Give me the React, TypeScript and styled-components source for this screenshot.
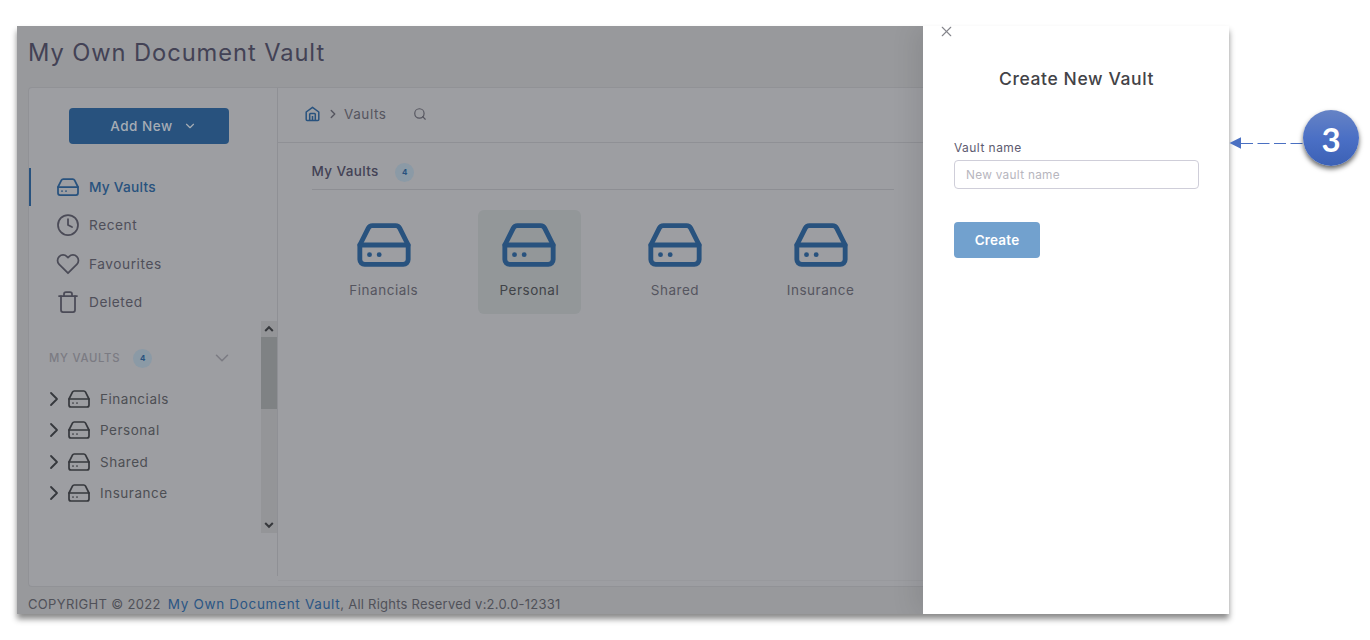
import React from 'react';
import styled, { createGlobalStyle, css } from 'styled-components';
import {
  FiChevronDown, FiChevronRight, FiClock, FiHardDrive, FiHeart, FiSearch, FiTrash, FiX,
} from 'react-icons/fi';

const blue = '#28527e';
const ink = '#434255';
const text = '#55555f';
const line = '#8f9095';

const GlobalStyle = createGlobalStyle`
  * { box-sizing: border-box; }
  body {
    margin: 0;
    background: #fff;
    font-family: Inter, "Liberation Sans", sans-serif;
    overflow: hidden;
  }
`;

const Page = styled.div`
  display: flex;
  align-items: flex-start;
  width: 1370px;
  height: 640px;
  padding: 26px 0 0 17px;
`;

const Frame = styled.div`
  display: flex;
  flex: none;
  width: 1212px;
  height: 588px;
  box-shadow: 0 5px 6px 0 rgba(0, 0, 0, 0.46);
`;

const AppPane = styled.div`
  display: flex;
  flex-direction: column;
  width: 906px;
  padding-left: 11px;
  background: #98999c;
  overflow: hidden;
`;

const AppTitle = styled.h1`
  height: 61px;
  margin: 0;
  font-size: 23.7px;
  font-weight: 400;
  line-height: 54px;
  letter-spacing: 0.92px;
  color: ${ink};
`;

const Card = styled.div`
  display: flex;
  height: 500px;
  border: 1px solid #919296;
  border-right: 0;
  border-radius: 4px 0 0 4px;
  background: #9d9ea2;
`;

const Sidebar = styled.aside`
  display: flex;
  flex-direction: column;
  width: 249px;
  height: 488px;
  border-right: 1px solid ${line};
`;

const AddButton = styled.button`
  display: flex;
  align-items: center;
  justify-content: center;
  gap: 10px;
  width: 160px;
  height: 36px;
  margin: 20px 0 24px 40px;
  padding: 0 0 0 9px;
  border: 0;
  border-radius: 4px;
  background: ${blue};
  color: #a6adb5;
  font: 500 13.5px Inter, sans-serif;
  letter-spacing: 0.5px;
`;

const Nav = styled.nav`
  display: flex;
  flex-direction: column;
`;

const NavItem = styled.a<{ $active?: boolean }>`
  display: flex;
  align-items: center;
  gap: 9px;
  height: 38.25px;
  padding-left: 25px;
  border-left: 2px solid transparent;
  font-size: 13.7px;
  letter-spacing: 0.55px;
  color: #4f4f5a;
  svg { stroke-width: 1.75; color: #4b4b57; }
  ${(p) => p.$active && css`
    border-left-color: ${blue};
    font-weight: 500;
    letter-spacing: 0.24px;
    color: ${blue};
    svg { color: ${blue}; }
  `}
`;

const TreeArea = styled.div`
  display: flex;
  justify-content: space-between;
  height: 212px;
`;

const Tree = styled.div`
  display: flex;
  flex-direction: column;
  width: 204px;
  padding: 27px 0 0 20px;
`;

const TreeHead = styled.div`
  display: flex;
  align-items: center;
  height: 20px;
  margin-bottom: 15px;
  font-size: 11.3px;
  font-weight: 500;
  letter-spacing: 0.75px;
  color: #7b7b83;
  white-space: nowrap;
  svg { margin-left: auto; stroke-width: 1.7; }
`;

const Badge = styled.span`
  display: inline-flex;
  align-items: center;
  justify-content: center;
  width: 19px;
  height: 19px;
  border-radius: 50%;
  background: #8b9aa6;
  color: ${blue};
  font-size: 8px;
  font-weight: 700;
  letter-spacing: 0;
`;

const TreeBadge = styled(Badge)`
  margin-left: 13px;
`;

const TreeRow = styled.div`
  display: flex;
  align-items: center;
  height: 31.5px;
  font-size: 13.5px;
  letter-spacing: 0.52px;
  color: #4d4f54;
`;

const RowChevron = styled(FiChevronRight)`
  margin-left: -7px;
  margin-right: 1px;
  stroke-width: 1.8;
  color: #36383d;
`;

const RowIcon = styled(FiHardDrive)`
  margin-right: 9px;
  stroke-width: 1.7;
  color: #36383d;
`;

const ScrollBar = styled.div`
  display: flex;
  flex-direction: column;
  width: 16px;
  background: #949598;
`;

const ScrollButton = styled.span`
  display: flex;
  align-items: center;
  justify-content: center;
  height: 16px;
`;

const ScrollThumb = styled.span`
  height: 72px;
  margin-bottom: auto;
  background: #7f8284;
`;

const Main = styled.main`
  flex: 1;
  height: 493px;
  border-bottom: 1px solid #98999d;
`;

const Crumbs = styled.div`
  display: flex;
  align-items: center;
  height: 55px;
  padding: 0 0 2px 27px;
  border-bottom: 1px solid ${line};
  font-size: 13.5px;
  letter-spacing: 0.58px;
  color: ${text};
`;

const CrumbIcon = styled(FiChevronRight)`
  margin: 0 4px 0 6px;
  stroke-width: 2.4;
`;

const SearchIcon = styled(FiSearch)`
  margin-left: 26px;
  margin-top: -1px;
`;

const Section = styled.section`
  width: 582px;
  margin-left: 33.500px;
`;

const SectionHead = styled.div`
  display: flex;
  align-items: center;
  height: 47px;
  padding-top: 12px;
  margin-bottom: 20px;
  border-bottom: 1px solid #8d8e93;
  font-size: 13.5px;
  font-weight: 500;
  letter-spacing: 0.38px;
  color: ${ink};
`;

const SectionTitle = styled.span`
  margin: -3px 16.5px 0 0;
`;

const Tiles = styled.div`
  display: grid;
  grid-template-columns: repeat(4, 145.6px);
  justify-items: center;
  margin-left: -0.5px;
`;

const Tile = styled.div<{ $active?: boolean }>`
  display: flex;
  flex-direction: column;
  align-items: center;
  width: 103px;
  height: 104px;
  padding-top: 6px;
  border-radius: 6px;
  background: ${(p) => (p.$active ? '#939799' : 'transparent')};
  color: ${(p) => (p.$active ? '#404348' : text)};
  font-size: 13.5px;
  letter-spacing: 0.52px;
  svg { margin-bottom: 8px; color: ${blue}; }
`;

const Footer = styled.footer`
  display: flex;
  height: 27px;
  padding-top: 1px;
  line-height: 33px;
  font-size: 13px;
  letter-spacing: 0.34px;
  color: #505159;
  white-space: pre;
`;

const FooterLink = styled.a`
  margin-left: 7px;
  font-size: 13.5px;
  letter-spacing: 0.68px;
  color: #2b5684;
`;

const Rights = styled.span`
  letter-spacing: 0.23px;
`;

const Drawer = styled.section`
  position: relative;
  display: flex;
  flex-direction: column;
  align-items: flex-start;
  width: 306px;
  padding: 0 29px 0 31px;
  background: #fff;
  box-shadow: -8px 0 24px rgba(0, 0, 0, 0.09);
  clip-path: inset(0 0 0 -40px);
`;

const CloseIcon = styled(FiX)`
  margin: -3px 0 0 -16px;
  stroke-width: 1.6;
  color: #85868c;
`;

const DrawerTitle = styled.h2`
  align-self: center;
  margin: 26px 0 49px -1px;
  font-size: 17.5px;
  font-weight: 450;
  line-height: 26px;
  letter-spacing: 0.6px;
  color: #434347;
`;

const Label = styled.label`
  height: 20px;
  font-size: 12px;
  line-height: 16px;
  letter-spacing: 0.45px;
  color: #5d5b70;
`;

const Input = styled.input`
  width: 245px;
  height: 29px;
  padding: 0 11px;
  border: 1px solid #cfced9;
  border-radius: 4px;
  font: 400 11.8px Inter, sans-serif;
  letter-spacing: 0.3px;
  &::placeholder { color: #b7b6be; opacity: 1; }
`;

const CreateButton = styled.button`
  width: 86px;
  height: 36px;
  margin-top: 33px;
  padding: 0;
  border: 0;
  border-radius: 4px;
  background: #72a1ce;
  color: #fff;
  font: 600 13.5px Inter, sans-serif;
  letter-spacing: 0.2px;
`;

const Form = styled.form`
  display: flex;
  flex-direction: column;
  align-items: flex-start;
  margin-top: -1px;
`;

const Callout = styled.div`
  display: flex;
  align-items: center;
  margin-top: 84px;
`;

const Arrow = styled.svg`
  margin-top: 10px;
`;

const Step = styled.div`
  display: flex;
  align-items: center;
  justify-content: center;
  width: 56px;
  height: 56px;
  padding-top: 1px;
  border-radius: 50%;
  background: linear-gradient(#6683c5, #4a6fc5 52%, #3c61b5);
  box-shadow: 0 3px 5px rgba(0, 0, 0, 0.6);
  color: #fff;
  font: 700 33px Lato, sans-serif;
`;

const vaults = ['Financials', 'Personal', 'Shared', 'Insurance'];

const HomeIcon = () => (
  <svg width="15" height="16" viewBox="0 0 15 16" fill="none" stroke={blue} strokeWidth="1.5" strokeLinejoin="round">
    <path d="M1.2 6 7.500 1.300 13.800 6v7.600a1 1 0 0 1-1 1H2.200a1 1 0 0 1-1-1Z" />
    <path d="M4.700 14.400V8.200a.8.8 0 0 1 .8-.8h4a.8.8 0 0 1 .8.8v6.200M7.500 10v4.400" />
  </svg>
);

const ScrollArrow = ({ down }: { down?: boolean }) => (
  <svg width="10" height="8" viewBox="0 0 10 8" fill="none" stroke="#36383c" strokeWidth="2">
    <path d={down ? 'M1.2 2 5 5.8 8.8 2' : 'M1.2 6 5 2.2 8.8 6'} />
  </svg>
);

export default function App() {
  return (
    <>
      <GlobalStyle />
      <Page>
        <Frame>
          <AppPane>
            <AppTitle>My Own Document Vault</AppTitle>
            <Card>
              <Sidebar>
                <AddButton>Add New <FiChevronDown size={14} /></AddButton>
                <Nav>
                  <NavItem $active><FiHardDrive size={24} />My Vaults</NavItem>
                  <NavItem><FiClock size={24} />Recent</NavItem>
                  <NavItem><FiHeart size={24} />Favourites</NavItem>
                  <NavItem><FiTrash size={24} />Deleted</NavItem>
                </Nav>
                <TreeArea>
                  <Tree>
                    <TreeHead>MY VAULTS<TreeBadge>4</TreeBadge><FiChevronDown size={22} /></TreeHead>
                    {vaults.map((name) => (
                      <TreeRow key={name}>
                        <RowChevron size={24} />
                        <RowIcon size={24} />
                        {name}
                      </TreeRow>
                    ))}
                  </Tree>
                  <ScrollBar>
                    <ScrollButton><ScrollArrow /></ScrollButton>
                    <ScrollThumb />
                    <ScrollButton><ScrollArrow down /></ScrollButton>
                  </ScrollBar>
                </TreeArea>
              </Sidebar>
              <Main>
                <Crumbs>
                  <HomeIcon />
                  <CrumbIcon size={14} />
                  Vaults
                  <SearchIcon size={14} />
                </Crumbs>
                <Section>
                  <SectionHead><SectionTitle>My Vaults</SectionTitle><Badge>4</Badge></SectionHead>
                  <Tiles>
                    {vaults.map((name) => (
                      <Tile key={name} $active={name === 'Personal'}>
                        <FiHardDrive size={58} />
                        {name}
                      </Tile>
                    ))}
                  </Tiles>
                </Section>
              </Main>
            </Card>
            <Footer>
              COPYRIGHT © 2022<FooterLink>My Own Document Vault</FooterLink>
              <Rights>, All Rights Reserved v:2.0.0-12331</Rights>
            </Footer>
          </AppPane>
          <Drawer>
            <CloseIcon size={17} />
            <DrawerTitle>Create New Vault</DrawerTitle>
            <Form>
              <Label htmlFor="vault-name">Vault name</Label>
              <Input id="vault-name" placeholder="New vault name" />
              <CreateButton type="button">Create</CreateButton>
            </Form>
          </Drawer>
        </Frame>
        <Callout>
          <Arrow width="74" height="12" viewBox="0 0 74 12">
            <path d="M0.500 6 12 0.300V11.700Z" fill="#4a70c2" />
            <path d="M12 6.500H74" stroke="#4a70c2" strokeWidth="1" strokeDasharray="12 4.500" />
          </Arrow>
          <Step>3</Step>
        </Callout>
      </Page>
    </>
  );
}
